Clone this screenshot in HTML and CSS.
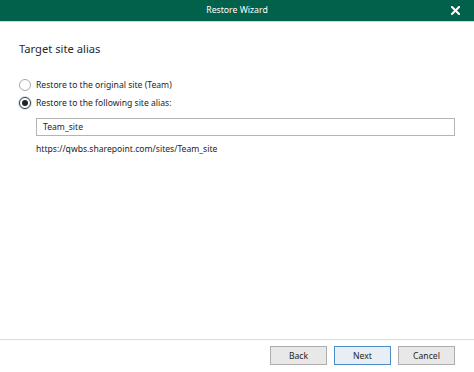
FILE: index.html
```html
<!DOCTYPE html>
<html>
<head>
<meta charset="utf-8">
<link rel="stylesheet" href="styles.css">
</head>
<body>
<div class="window">
  <div class="titlebar">
    <span class="spacer"></span>
    <span class="title">Restore Wizard</span>
    <span class="close">
      <svg width="9" height="9" viewBox="0 0 9 9"><path d="M1 1 L8 8 M8 1 L1 8" stroke="#fff" stroke-width="2" stroke-linecap="square"/></svg>
    </span>
  </div>
  <div class="content">
    <div class="heading">Target site alias</div>
    <div class="options">
      <label class="option"><span class="radio"></span><span>Restore to the original site (Team)</span></label>
      <label class="option"><span class="radio checked"></span><span>Restore to the following site alias:</span></label>
    </div>
    <div class="indent">
      <div class="input">Team_site</div>
      <div class="url">https://qwbs.sharepoint.com/sites/Team_site</div>
    </div>
  </div>
  <div class="footer">
    <button class="btn">Back</button>
    <button class="btn primary">Next</button>
    <button class="btn">Cancel</button>
  </div>
</div>
</body>
</html>
```

FILE: styles.css
```css
html, body {
  margin: 0;
  padding: 0;
  background: #ffffff;
}
body {
  font-family: "Noto Sans", "Open Sans", sans-serif;
  font-size: 8.6px;
  color: #1e1e1e;
}
.window {
  width: 474px;
  height: 372px;
  display: flex;
  flex-direction: column;
}
.titlebar {
  height: 21px;
  background: #02614a;
  border-bottom: 1px solid #bfe0d5;
  display: grid;
  grid-template-columns: 1fr auto 1fr;
  align-items: center;
  color: #ffffff;
}
.title {
  font-size: 8.7px;
  line-height: 21px;
}
.close {
  justify-self: end;
  margin-right: 14px;
  display: flex;
  align-items: center;
}
.content {
  flex: 1;
  padding: 18px 19px 0 19px;
}
.heading {
  font-size: 11.2px;
  color: #2a2a2a;
  line-height: 17px;
}
.options {
  margin-top: 21px;
  display: flex;
  flex-direction: column;
  gap: 5px;
}
.option {
  display: flex;
  align-items: center;
  gap: 5px;
  height: 13px;
}
.radio {
  width: 12px;
  height: 12px;
  border: 1px solid #a8a8a8;
  border-radius: 50%;
  box-sizing: border-box;
  display: flex;
  align-items: center;
  justify-content: center;
  background: #fff;
}
.radio.checked {
  border-color: #3c3c3c;
  box-shadow: 0 0 0 1px #cfe3f3;
}
.radio.checked::after {
  content: "";
  width: 6px;
  height: 6px;
  border-radius: 50%;
  background: #222;
}
.indent {
  padding-left: 17px;
  margin-top: 9px;
}
.input {
  height: 18px;
  box-sizing: border-box;
  border: 1px solid #b4b4b4;
  padding: 0 6px;
  line-height: 16px;
  color: #1e1e1e;
}
.url {
  margin-top: 6px;
  line-height: 14px;
}
.footer {
  height: 33px;
  box-sizing: border-box;
  border-top: 1px solid #dcdcdc;
  display: flex;
  justify-content: flex-end;
  gap: 7px;
  padding: 6px 19px 0 0;
}
.btn {
  width: 57px;
  height: 19px;
  border: 1px solid #adadad;
  background: #e8e8e8;
  font-family: "Noto Sans", "Open Sans", sans-serif;
  font-size: 8.6px;
  color: #1e1e1e;
  padding: 0;
}
.btn.primary {
  border-color: #4a8ec9;
  background: #e8eef4;
}
```
